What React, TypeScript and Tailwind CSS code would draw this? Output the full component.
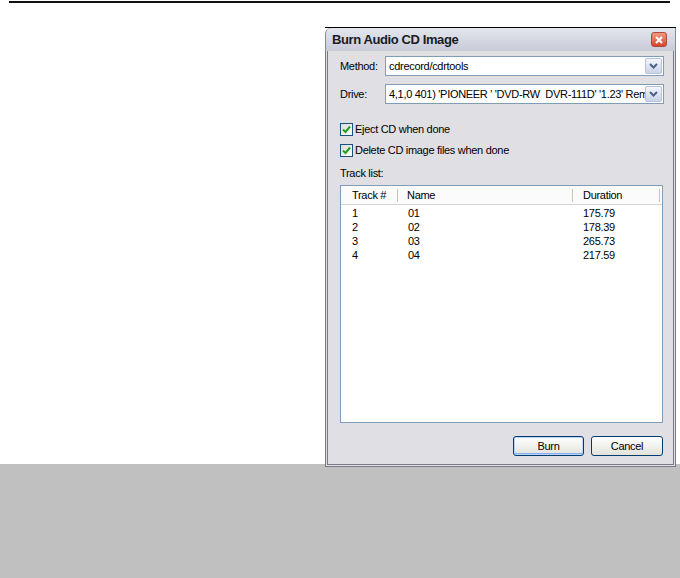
import React from "react";

const font = { fontFamily: '"Liberation Sans", Arial, sans-serif' };

function Chevron() {
  return (
    <svg width="9" height="6" viewBox="0 0 9 6">
      <path d="M1 1 L4.5 4.5 L8 1" fill="none" stroke="#4d6185" strokeWidth="2" />
    </svg>
  );
}

function Combo({ text }: { text: string }) {
  return (
    <div className="flex h-[20px] w-[279px] items-center border border-[#7f9db9] bg-white">
      <div className="flex-1 overflow-hidden whitespace-pre pl-[3px] text-[11px] tracking-[-0.3px] text-black">{text}</div>
      <div className="mr-[1px] flex h-[16px] w-[17px] items-center justify-center rounded-[2px] border border-[#b5c2da] bg-gradient-to-b from-[#f4f6fb] to-[#c9d3e6]">
        <Chevron />
      </div>
    </div>
  );
}

function Check({ label }: { label: string }) {
  return (
    <div className="flex h-[13px] items-center">
      <div className="flex h-[13px] w-[13px] items-center justify-center border border-[#1c5180] bg-gradient-to-br from-[#dcdcd7] to-white">
        <svg width="9" height="9" viewBox="0 0 9 9">
          <path d="M1 4.5 L3.5 7 L8 1.5" fill="none" stroke="#21a121" strokeWidth="2" />
        </svg>
      </div>
      <span className="ml-[2px] text-[11px] tracking-[-0.3px] text-black">{label}</span>
    </div>
  );
}

const rows = [
  ["1", "01", "175.79"],
  ["2", "02", "178.39"],
  ["3", "03", "265.73"],
  ["4", "04", "217.59"],
];

export default function App() {
  return (
    <div className="h-[578px] w-[680px] bg-white" style={font}>
      <div className="pt-[1px]">
        <div className="ml-[9px] h-[2px] w-[661px] bg-[#111]" />
      </div>
      <div className="flex h-[461px] items-start pl-[325px] pt-[24px]">
        <div className="relative z-10 flex h-[440px] w-[351px] flex-col border-t border-t-black">
          <div className="flex h-[23px] items-center justify-between rounded-tl-[6px] border-x border-x-[#8b8b95] bg-gradient-to-b from-[#e4e6ee] to-[#c8cbd8] pl-[6px] pr-[8px]">
            <span className="text-[13px] font-bold tracking-[-0.4px] text-[#1a1a24]">Burn Audio CD Image</span>
            <div className="flex h-[15px] w-[16px] items-center justify-center rounded-[3px] border border-[#b04a3a] bg-gradient-to-b from-[#f09a80] to-[#d5442a]">
              <svg width="8" height="8" viewBox="0 0 8 8">
                <path d="M1 1 L7 7 M7 1 L1 7" stroke="white" strokeWidth="2" />
              </svg>
            </div>
          </div>
          <div className="flex flex-1 flex-col border-[3px] border-t-0 border-double border-[#7a7a84] bg-[#e0dfe3] pl-[12px] pr-[9px] pt-[5px]">
            <div className="flex items-center">
              <span className="w-[45px] text-[11px] tracking-[-0.3px] text-black">Method:</span>
              <Combo text="cdrecord/cdrtools" />
            </div>
            <div className="mt-[8px] flex items-center">
              <span className="w-[45px] text-[11px] tracking-[-0.3px] text-black">Drive:</span>
              <Combo text="4,1,0 401) 'PIONEER ' 'DVD-RW  DVR-111D' '1.23' Removable CD-ROM" />
            </div>
            <div className="mt-[19px]">
              <Check label="Eject CD when done" />
            </div>
            <div className="mt-[8px]">
              <Check label="Delete CD image files when done" />
            </div>
            <div className="mt-[10px] text-[11px] leading-[13px] tracking-[-0.3px] text-black">Track list:</div>
            <div className="mt-[5px] h-[238px] w-[323px] border border-[#7f9db9] bg-white">
              <div className="flex h-[19px] items-center border-b border-b-[#d5d5d5] bg-[#fbfbfb] text-[11px] tracking-[-0.3px] text-black">
                <div className="w-[56px] pl-[11px]">Track #</div>
                <div className="h-[13px] w-px bg-[#c7c5b2]" />
                <div className="w-[174px] pl-[9px]">Name</div>
                <div className="h-[13px] w-px bg-[#c7c5b2]" />
                <div className="w-[86px] pl-[10px]">Duration</div>
                <div className="h-[13px] w-px bg-[#c7c5b2]" />
              </div>
              <div className="pt-[1px]">
                {rows.map((r) => (
                  <div key={r[0]} className="flex h-[14px] items-center text-[11px] leading-[14px] tracking-[-0.3px] text-black">
                    <div className="w-[67px] pl-[11px]">{r[0]}</div>
                    <div className="w-[175px]">{r[1]}</div>
                    <div>{r[2]}</div>
                  </div>
                ))}
              </div>
            </div>
            <div className="mt-[13px] flex justify-end gap-[7px] pr-[1px]">
              <button className="h-[20px] w-[71px] rounded-[3px] border border-[#003c74] bg-gradient-to-b from-white to-[#e3e3dc] text-[11px] tracking-[-0.3px] text-black shadow-[inset_0_0_0_1px_#bcd4f6,inset_0_-1px_0_1px_#89adf3]">
                Burn
              </button>
              <button className="h-[20px] w-[72px] rounded-[3px] border border-[#003c74] bg-gradient-to-b from-white to-[#e3e3dc] text-[11px] tracking-[-0.3px] text-black">
                Cancel
              </button>
            </div>
          </div>
        </div>
      </div>
      <div className="h-[114px] bg-[#c0c0c0]" />
    </div>
  );
}
